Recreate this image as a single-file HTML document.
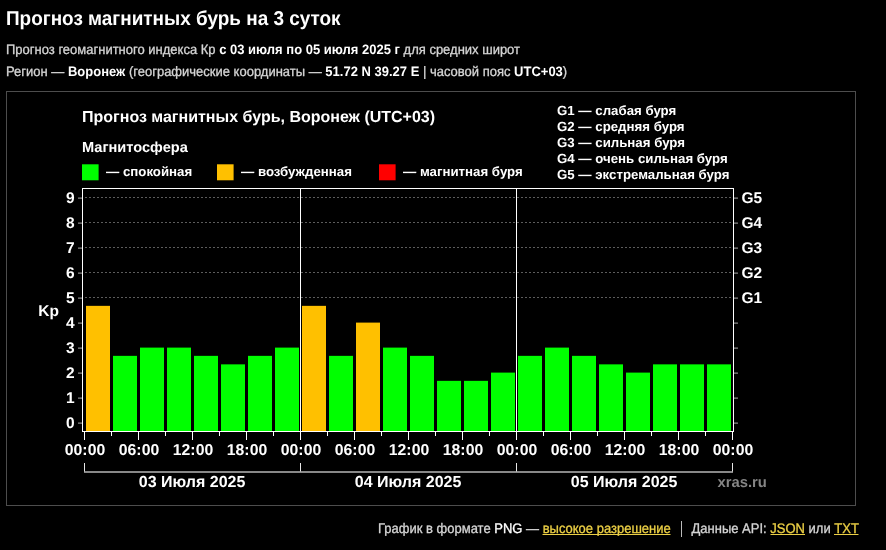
<!DOCTYPE html>
<html><head><meta charset="utf-8">
<style>
html,body{margin:0;padding:0;background:#000;width:886px;height:550px;overflow:hidden;}
svg{will-change:transform}
svg text{font-family:"Liberation Sans",sans-serif;fill:#fff;text-rendering:geometricPrecision}
.h1{font-size:18.95px;font-weight:bold}
.sub{font-size:13px;fill:#d4d4d4;stroke:#d4d4d4;stroke-width:0.3px}
.b{font-weight:bold;fill:#fff;stroke:none}
.ct{font-size:16px;font-weight:bold}
.mg{font-size:14.6px;font-weight:bold}
.lg{font-size:13.25px;font-weight:bold}
.ax{font-size:15.5px;font-weight:bold}
.kp{font-size:15.5px;font-weight:bold}
.xl{font-size:15.8px;font-weight:bold}
.dl{font-size:16.0px;font-weight:bold}
.xr{font-size:14.8px;font-weight:bold;fill:#858585}
.ft{font-size:13px;fill:#d4d4d4;stroke:#d4d4d4;stroke-width:0.3px}
.w{fill:#fff;stroke:#fff}
.lk{fill:#ebcf45;stroke:#ebcf45}
</style></head><body>
<svg width="886" height="550" style="position:absolute;left:0;top:0">
<text transform="translate(6.00,24.70) scale(1.0,1.06)" class="h1">Прогноз магнитных бурь на 3 суток</text>
<text transform="translate(6.00,54.00) scale(1.0,1.05)" class="sub">Прогноз геомагнитного индекса Кр <tspan class="b">с 03 июля по 05 июля 2025 г</tspan> для средних широт</text>
<text transform="translate(6.00,76.00) scale(1.0,1.05)" class="sub">Регион — <tspan class="b">Воронеж</tspan> (географические координаты — <tspan class="b">51.72 N 39.27 E</tspan> | часовой пояс <tspan class="b">UTC+03</tspan>)</text>
<rect x="6.5" y="91.5" width="849" height="414" fill="none" stroke="#4d4d4d" stroke-width="1"/>
<text transform="translate(82.00,122.00)" class="ct">Прогноз магнитных бурь, Воронеж (UTC+03)</text>
<text transform="translate(82.00,151.60)" class="mg">Магнитосфера</text>
<rect x="82" y="164.3" width="16.6" height="16" fill="#00ff00"/>
<rect x="217" y="164.3" width="16.6" height="16" fill="#ffc000"/>
<rect x="379" y="164.3" width="16.6" height="16" fill="#ff0000"/>
<text transform="translate(106.00,175.50)" class="lg">— спокойная</text>
<text transform="translate(241.00,175.50)" class="lg">— возбужденная</text>
<text transform="translate(403.00,175.50)" class="lg">— магнитная буря</text>
<text transform="translate(557.00,115.20)" class="lg">G1 — слабая буря</text>
<text transform="translate(557.00,131.10)" class="lg">G2 — средняя буря</text>
<text transform="translate(557.00,147.00)" class="lg">G3 — сильная буря</text>
<text transform="translate(557.00,162.90)" class="lg">G4 — очень сильная буря</text>
<text transform="translate(557.00,178.80)" class="lg">G5 — экстремальная буря</text>
<line x1="85" y1="297.50" x2="733" y2="297.50" stroke="#5c5c5c" stroke-width="1" stroke-dasharray="2 2"/>
<line x1="85" y1="272.50" x2="733" y2="272.50" stroke="#5c5c5c" stroke-width="1" stroke-dasharray="2 2"/>
<line x1="85" y1="247.50" x2="733" y2="247.50" stroke="#5c5c5c" stroke-width="1" stroke-dasharray="2 2"/>
<line x1="85" y1="222.50" x2="733" y2="222.50" stroke="#5c5c5c" stroke-width="1" stroke-dasharray="2 2"/>
<line x1="85" y1="197.50" x2="733" y2="197.50" stroke="#5c5c5c" stroke-width="1" stroke-dasharray="2 2"/>
<rect x="86" y="305.85" width="24" height="125.15" fill="#ffc000"/>
<rect x="113" y="355.85" width="24" height="75.15" fill="#00ff00"/>
<rect x="140" y="347.60" width="24" height="83.40" fill="#00ff00"/>
<rect x="167" y="347.60" width="24" height="83.40" fill="#00ff00"/>
<rect x="194" y="355.85" width="24" height="75.15" fill="#00ff00"/>
<rect x="221" y="364.35" width="24" height="66.65" fill="#00ff00"/>
<rect x="248" y="355.85" width="24" height="75.15" fill="#00ff00"/>
<rect x="275" y="347.60" width="24" height="83.40" fill="#00ff00"/>
<rect x="302" y="305.85" width="24" height="125.15" fill="#ffc000"/>
<rect x="329" y="355.85" width="24" height="75.15" fill="#00ff00"/>
<rect x="356" y="322.60" width="24" height="108.40" fill="#ffc000"/>
<rect x="383" y="347.60" width="24" height="83.40" fill="#00ff00"/>
<rect x="410" y="355.85" width="24" height="75.15" fill="#00ff00"/>
<rect x="437" y="380.85" width="24" height="50.15" fill="#00ff00"/>
<rect x="464" y="380.85" width="24" height="50.15" fill="#00ff00"/>
<rect x="491" y="372.60" width="24" height="58.40" fill="#00ff00"/>
<rect x="518" y="355.85" width="24" height="75.15" fill="#00ff00"/>
<rect x="545" y="347.60" width="24" height="83.40" fill="#00ff00"/>
<rect x="572" y="355.85" width="24" height="75.15" fill="#00ff00"/>
<rect x="599" y="364.35" width="24" height="66.65" fill="#00ff00"/>
<rect x="626" y="372.60" width="24" height="58.40" fill="#00ff00"/>
<rect x="653" y="364.35" width="24" height="66.65" fill="#00ff00"/>
<rect x="680" y="364.35" width="24" height="66.65" fill="#00ff00"/>
<rect x="707" y="364.35" width="24" height="66.65" fill="#00ff00"/>
<rect x="82" y="188" width="652" height="1" fill="#fff"/>
<rect x="82" y="431" width="652" height="1" fill="#fff"/>
<rect x="82" y="188" width="1" height="244" fill="#fff"/>
<rect x="733" y="188" width="1" height="244" fill="#fff"/>
<rect x="300" y="188" width="1" height="244" fill="#fff"/>
<rect x="516" y="188" width="1" height="244" fill="#fff"/>
<rect x="78" y="422.60" width="4" height="1.0" fill="#aaa"/><rect x="734" y="422.60" width="4" height="1.0" fill="#aaa"/>
<text transform="translate(74.50,427.70)" class="ax" text-anchor="end">0</text>
<rect x="78" y="397.60" width="4" height="1.0" fill="#aaa"/><rect x="734" y="397.60" width="4" height="1.0" fill="#aaa"/>
<text transform="translate(74.50,402.70)" class="ax" text-anchor="end">1</text>
<rect x="78" y="372.60" width="4" height="1.0" fill="#aaa"/><rect x="734" y="372.60" width="4" height="1.0" fill="#aaa"/>
<text transform="translate(74.50,377.70)" class="ax" text-anchor="end">2</text>
<rect x="78" y="347.60" width="4" height="1.0" fill="#aaa"/><rect x="734" y="347.60" width="4" height="1.0" fill="#aaa"/>
<text transform="translate(74.50,352.70)" class="ax" text-anchor="end">3</text>
<rect x="78" y="322.60" width="4" height="1.0" fill="#aaa"/><rect x="734" y="322.60" width="4" height="1.0" fill="#aaa"/>
<text transform="translate(74.50,327.70)" class="ax" text-anchor="end">4</text>
<rect x="78" y="297.60" width="4" height="1.0" fill="#aaa"/><rect x="734" y="297.60" width="4" height="1.0" fill="#aaa"/>
<text transform="translate(74.50,302.70)" class="ax" text-anchor="end">5</text>
<rect x="78" y="272.60" width="4" height="1.0" fill="#aaa"/><rect x="734" y="272.60" width="4" height="1.0" fill="#aaa"/>
<text transform="translate(74.50,277.70)" class="ax" text-anchor="end">6</text>
<rect x="78" y="247.60" width="4" height="1.0" fill="#aaa"/><rect x="734" y="247.60" width="4" height="1.0" fill="#aaa"/>
<text transform="translate(74.50,252.70)" class="ax" text-anchor="end">7</text>
<rect x="78" y="222.60" width="4" height="1.0" fill="#aaa"/><rect x="734" y="222.60" width="4" height="1.0" fill="#aaa"/>
<text transform="translate(74.50,227.70)" class="ax" text-anchor="end">8</text>
<rect x="78" y="197.60" width="4" height="1.0" fill="#aaa"/><rect x="734" y="197.60" width="4" height="1.0" fill="#aaa"/>
<text transform="translate(74.50,202.70)" class="ax" text-anchor="end">9</text>
<text transform="translate(741.50,302.70)" class="ax">G1</text>
<text transform="translate(741.50,277.70)" class="ax">G2</text>
<text transform="translate(741.50,252.70)" class="ax">G3</text>
<text transform="translate(741.50,227.70)" class="ax">G4</text>
<text transform="translate(741.50,202.70)" class="ax">G5</text>
<text transform="translate(38.30,315.60)" class="kp">Kp</text>
<rect x="84" y="432" width="1" height="8" fill="#fff"/><rect x="111" y="432" width="1" height="4" fill="#fff"/><rect x="138" y="432" width="1" height="8" fill="#fff"/><rect x="165" y="432" width="1" height="4" fill="#fff"/><rect x="192" y="432" width="1" height="8" fill="#fff"/><rect x="219" y="432" width="1" height="4" fill="#fff"/><rect x="246" y="432" width="1" height="8" fill="#fff"/><rect x="273" y="432" width="1" height="4" fill="#fff"/><rect x="300" y="432" width="1" height="8" fill="#fff"/><rect x="327" y="432" width="1" height="4" fill="#fff"/><rect x="354" y="432" width="1" height="8" fill="#fff"/><rect x="381" y="432" width="1" height="4" fill="#fff"/><rect x="408" y="432" width="1" height="8" fill="#fff"/><rect x="435" y="432" width="1" height="4" fill="#fff"/><rect x="462" y="432" width="1" height="8" fill="#fff"/><rect x="489" y="432" width="1" height="4" fill="#fff"/><rect x="516" y="432" width="1" height="8" fill="#fff"/><rect x="543" y="432" width="1" height="4" fill="#fff"/><rect x="570" y="432" width="1" height="8" fill="#fff"/><rect x="597" y="432" width="1" height="4" fill="#fff"/><rect x="624" y="432" width="1" height="8" fill="#fff"/><rect x="651" y="432" width="1" height="4" fill="#fff"/><rect x="678" y="432" width="1" height="8" fill="#fff"/><rect x="705" y="432" width="1" height="4" fill="#fff"/><rect x="732" y="432" width="1" height="8" fill="#fff"/>
<text transform="translate(85.00,455.40)" class="xl" text-anchor="middle">00:00</text>
<text transform="translate(139.00,455.40)" class="xl" text-anchor="middle">06:00</text>
<text transform="translate(193.00,455.40)" class="xl" text-anchor="middle">12:00</text>
<text transform="translate(247.00,455.40)" class="xl" text-anchor="middle">18:00</text>
<text transform="translate(301.00,455.40)" class="xl" text-anchor="middle">00:00</text>
<text transform="translate(355.00,455.40)" class="xl" text-anchor="middle">06:00</text>
<text transform="translate(409.00,455.40)" class="xl" text-anchor="middle">12:00</text>
<text transform="translate(463.00,455.40)" class="xl" text-anchor="middle">18:00</text>
<text transform="translate(517.00,455.40)" class="xl" text-anchor="middle">00:00</text>
<text transform="translate(571.00,455.40)" class="xl" text-anchor="middle">06:00</text>
<text transform="translate(625.00,455.40)" class="xl" text-anchor="middle">12:00</text>
<text transform="translate(679.00,455.40)" class="xl" text-anchor="middle">18:00</text>
<text transform="translate(733.00,455.40)" class="xl" text-anchor="middle">00:00</text>
<rect x="84" y="463" width="1" height="9" fill="#e6e6e6"/><rect x="300" y="463" width="1" height="9" fill="#e6e6e6"/><rect x="516" y="463" width="1" height="9" fill="#e6e6e6"/><rect x="732" y="463" width="1" height="9" fill="#e6e6e6"/><rect x="84" y="471.2" width="649" height="1.6" fill="#aaa"/>
<text transform="translate(192.05,487.30)" class="dl" text-anchor="middle">03 Июля 2025</text>
<text transform="translate(408.05,487.30)" class="dl" text-anchor="middle">04 Июля 2025</text>
<text transform="translate(624.05,487.30)" class="dl" text-anchor="middle">05 Июля 2025</text>
<text transform="translate(717.50,487.30)" class="xr">xras.ru</text>
<text transform="translate(378.00,533.00) scale(1.0,1.06)" class="ft">График в формате <tspan class="w">PNG</tspan> — <tspan class="lk">высокое разрешение</tspan></text>
<rect x="681" y="521" width="1" height="16" fill="#bbb"/>
<text transform="translate(691.50,533.00) scale(1.0,1.06)" class="ft">Данные API: <tspan class="lk">JSON</tspan> или <tspan class="lk">TXT</tspan></text>
<rect x="542.5" y="534" width="128.0" height="1" fill="#ebcf45"/>
<rect x="770.5" y="534" width="34.5" height="1" fill="#ebcf45"/>
<rect x="834" y="534" width="24.5" height="1" fill="#ebcf45"/>
</svg>
</body></html>
